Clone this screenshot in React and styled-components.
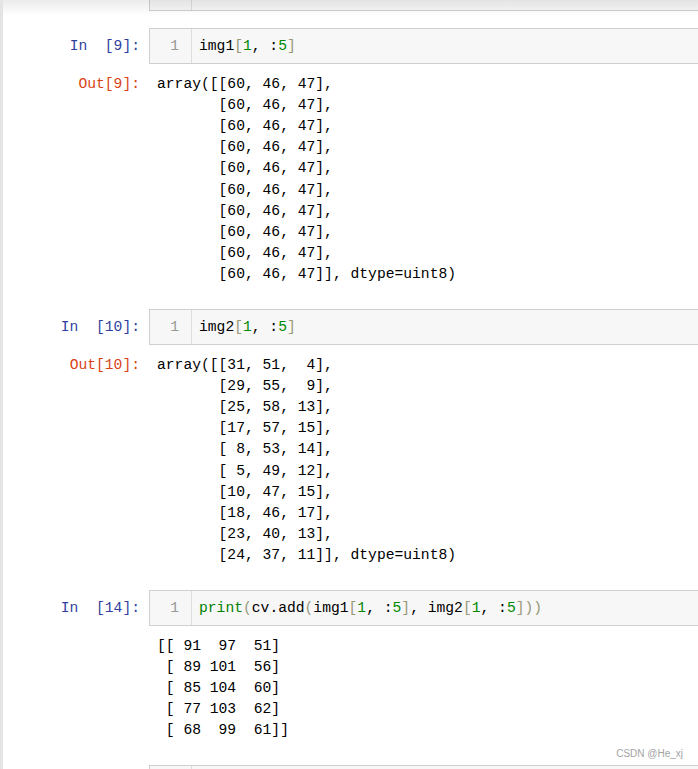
import React from "react";
import styled, { createGlobalStyle } from "styled-components";

const GlobalStyle = createGlobalStyle`
  html, body { margin: 0; padding: 0; background: #fff; }
  body { font-family: "Liberation Mono", "DejaVu Sans Mono", monospace; }
`;

const MONO = `"Liberation Mono", "DejaVu Sans Mono", monospace`;

const Page = styled.div`
  position: relative;
  width: 698px;
  height: 769px;
  box-sizing: border-box;
  overflow: hidden;
  border-left: 3px solid #e4e4e4;
  background: #fff;
  font-family: ${MONO};
  font-size: 14.67px;
  line-height: 21.2px;
  &::before {
    content: "";
    position: absolute;
    top: 0;
    left: 0;
    right: 0;
    height: 16px;
    background: linear-gradient(rgba(0, 0, 0, 0.08), rgba(0, 0, 0, 0));
    z-index: 2;
    pointer-events: none;
  }
`;

const Cell = styled.div`
  margin-top: ${(p) => (p.$partialTop ? "-25px" : "17px")};
`;

const Row = styled.div`
  display: flex;
  align-items: flex-start;
`;

const Prompt = styled.div`
  flex: 0 0 146px;
  box-sizing: border-box;
  padding-right: 9px;
  padding-top: ${(p) => (p.$out ? "0" : "8px")};
  text-align: right;
  white-space: pre;
  color: ${(p) => (p.$out ? "#D84315" : "#303F9F")};
`;

const InputBox = styled.div`
  flex: 1;
  display: flex;
  height: 36px;
  box-sizing: border-box;
  border: 1px solid #cfcfcf;
  border-right: none;
  background: #f7f7f7;
`;

const Gutter = styled.div`
  flex: 0 0 42px;
  box-sizing: border-box;
  border-right: 1px solid #dddddd;
  padding: 7px 12px 0 0;
  text-align: right;
  color: #999;
`;

const Code = styled.div`
  flex: 1;
  padding: 7px 0 0 7px;
  white-space: pre;
  color: #000;
`;

const OutputArea = styled.div`
  padding: 9.5px 0 6.5px;
`;

const OutputText = styled.pre`
  flex: 1;
  margin: 0;
  padding-left: 8px;
  font: inherit;
  white-space: pre;
  color: #000;
`;

const Tok = styled.span`
  color: ${(p) =>
    ({ br: "#997", num: "#080", kw: "#008000", var: "#000", op: "#000" }[p.$k] || "#000")};
`;

const Watermark = styled.div`
  position: absolute;
  right: 15px;
  bottom: 9px;
  font-family: "Liberation Sans", Arial, sans-serif;
  font-size: 10px;
  line-height: 12px;
  color: #a3a3a3;
`;

const idx = (name) => [
  <Tok key="a" $k="var">{name}</Tok>,
  <Tok key="b" $k="br">[</Tok>,
  <Tok key="c" $k="num">1</Tok>,
  <Tok key="d" $k="op">, :</Tok>,
  <Tok key="e" $k="num">5</Tok>,
  <Tok key="f" $k="br">]</Tok>,
];

const CodeCell = ({ n, children }) => (
  <Row>
    <Prompt>{n ? `In  [${n}]:` : ""}</Prompt>
    <InputBox>
      <Gutter>{n ? "1" : ""}</Gutter>
      <Code>{children}</Code>
    </InputBox>
  </Row>
);

const out9 =
  "array([[60, 46, 47],\n" +
  Array(8).fill("       [60, 46, 47],\n").join("") +
  "       [60, 46, 47]], dtype=uint8)";

const out10 = `array([[31, 51,  4],
       [29, 55,  9],
       [25, 58, 13],
       [17, 57, 15],
       [ 8, 53, 14],
       [ 5, 49, 12],
       [10, 47, 15],
       [18, 46, 17],
       [23, 40, 13],
       [24, 37, 11]], dtype=uint8)`;

const out14 = `[[ 91  97  51]
 [ 89 101  56]
 [ 85 104  60]
 [ 77 103  62]
 [ 68  99  61]]`;

export default function App() {
  return (
    <>
      <GlobalStyle />
      <Page>
        <Cell $partialTop>
          <CodeCell />
        </Cell>

        <Cell>
          <CodeCell n="9">{idx("img1")}</CodeCell>
          <OutputArea>
            <Row>
              <Prompt $out>Out[9]:</Prompt>
              <OutputText>{out9}</OutputText>
            </Row>
          </OutputArea>
        </Cell>

        <Cell>
          <CodeCell n="10">{idx("img2")}</CodeCell>
          <OutputArea>
            <Row>
              <Prompt $out>Out[10]:</Prompt>
              <OutputText>{out10}</OutputText>
            </Row>
          </OutputArea>
        </Cell>

        <Cell>
          <CodeCell n="14">
            <Tok $k="kw">print</Tok>
            <Tok $k="br">(</Tok>
            <Tok $k="var">cv</Tok>
            <Tok $k="op">.</Tok>
            <Tok $k="var">add</Tok>
            <Tok $k="br">(</Tok>
            {idx("img1")}
            <Tok $k="op">, </Tok>
            {idx("img2")}
            <Tok $k="br">))</Tok>
          </CodeCell>
          <OutputArea>
            <Row>
              <Prompt $out />
              <OutputText>{out14}</OutputText>
            </Row>
          </OutputArea>
        </Cell>

        <Cell>
          <CodeCell />
        </Cell>

        <Watermark>CSDN @He_xj</Watermark>
      </Page>
    </>
  );
}
